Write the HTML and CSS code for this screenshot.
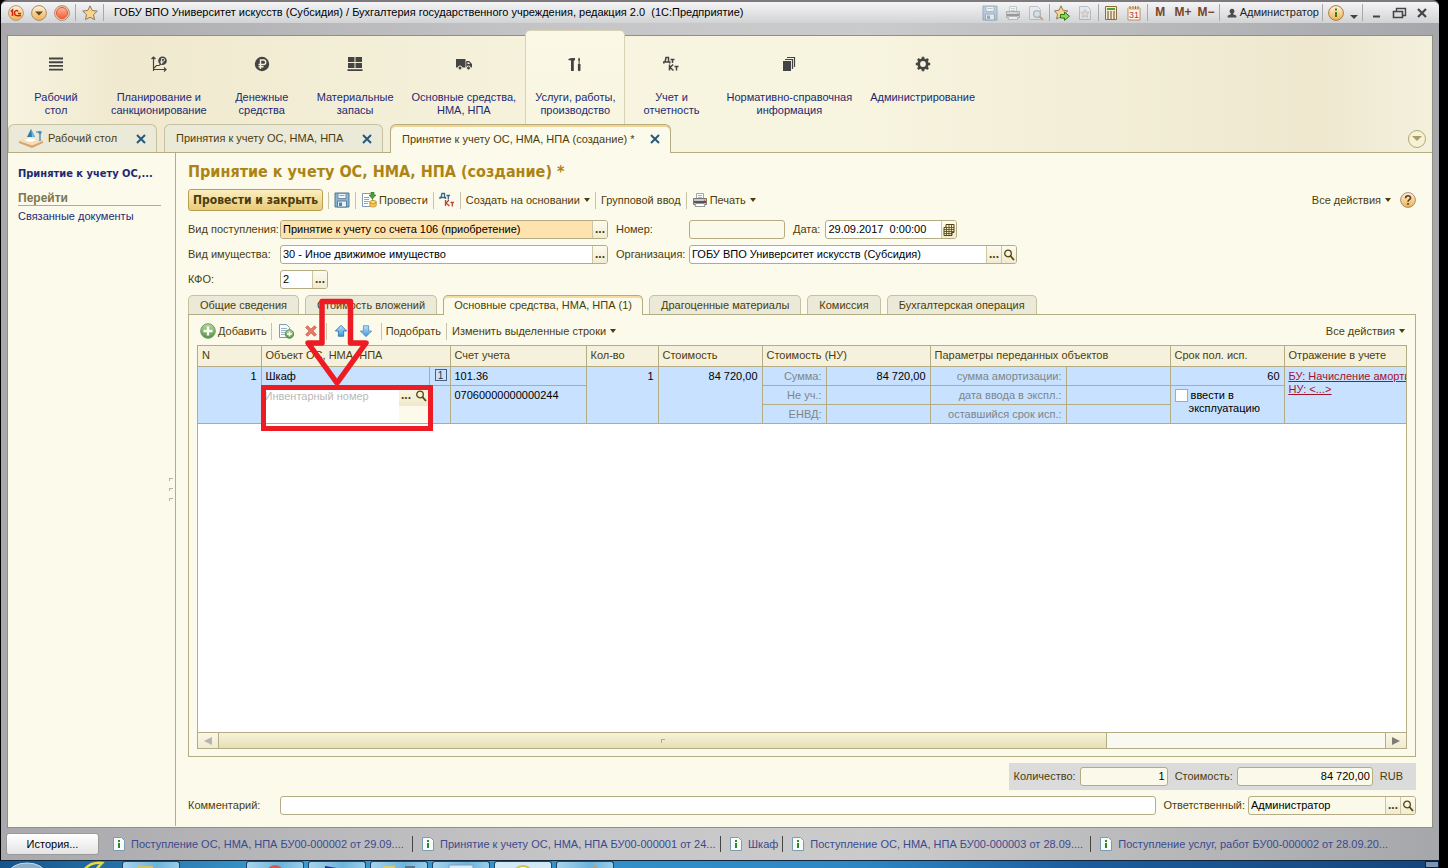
FILE: index.html
```html
<!DOCTYPE html>
<html lang="ru">
<head>
<meta charset="utf-8">
<title>Принятие к учету ОС, НМА, НПА (создание)</title>
<link rel="stylesheet" href="styles.css">
</head>
<body>
<svg class="defs" aria-hidden="true">
  <defs>
    <linearGradient id="orange" x1="0" y1="0" x2="0" y2="1"><stop offset="0" stop-color="#fff3d8"/><stop offset="1" stop-color="#f0b050"/></linearGradient>
    <linearGradient id="red" x1="0" y1="0" x2="0" y2="1"><stop offset="0" stop-color="#ffb59c"/><stop offset="1" stop-color="#f0603a"/></linearGradient>
    <linearGradient id="blue" x1="0" y1="0" x2="0" y2="1"><stop offset="0" stop-color="#b9e2fa"/><stop offset="1" stop-color="#3f95d6"/></linearGradient>
    <linearGradient id="green" x1="0" y1="0" x2="0" y2="1"><stop offset="0" stop-color="#b5dc98"/><stop offset="1" stop-color="#4f9440"/></linearGradient>
  </defs>
  <symbol id="i-save" viewBox="0 0 16 16"><path d="M1 1h14v14H1z" fill="#8fb3cf" stroke="#4d7898"/><path d="M4 1.500h8v5H4z" fill="#f4f8fb" stroke="#6b8fab"/><path d="M5.500 3.500h5" stroke="#8aa"/><path d="M3.500 9h9v6h-9z" fill="#e8f1f6" stroke="#54809f"/><path d="M5 10.500h3V14H5z" fill="#54809f"/></symbol>
  <symbol id="i-print" viewBox="0 0 16 16"><path d="M4.500 1.500h7V7h-7z" fill="#f8fafc" stroke="#a5a5a5"/><path d="M6 3.500h4M6 5.500h4" stroke="#9cb8cc"/><path d="M1.500 6.500h13v6h-13z" fill="#c9c9c9" stroke="#777"/><path d="M2 10h12" stroke="#555" stroke-width="2"/><path d="M4 11.500h8l1 3H3z" fill="#fff" stroke="#999"/><circle cx="12.500" cy="8.200" r=".8" fill="#e07030"/></symbol>
  <symbol id="i-find" viewBox="0 0 16 16"><path d="M1.500 1.500h8l3 3v10h-11z" fill="#e4ecf1" stroke="#8c9ca8"/><circle cx="9" cy="9" r="3.400" fill="#cfdde6" stroke="#78858f" stroke-width="1.300"/><path d="M11.500 11.500l3.500 3.500" stroke="#a0715c" stroke-width="2"/></symbol>
  <symbol id="i-star" viewBox="0 0 16 16"><path d="M8 .8l2.200 4.700 5.100.6-3.800 3.500 1 5.100L8 12.200l-4.500 2.500 1-5.100L.7 6.100l5.100-.6z" fill="#fbd485" stroke="#8b7a68"/></symbol>
  <symbol id="i-stargo" viewBox="0 0 16 16"><path d="M7 .8l2 4.500 4.800.6-3.600 3.300.9 4.800L7 11.700 2.600 14l.9-4.800L.4 5.900l4.600-.6z" fill="#fbd485" stroke="#8b7a68"/><path d="M6.500 9.500h4V7l5 4.200-5 4.200V13h-4z" fill="#8ed35a" stroke="#2f7a18"/></symbol>
  <symbol id="i-docstar" viewBox="0 0 16 16"><path d="M2.500 1.500h8l3 3v10h-11z" fill="#dfe5ea" stroke="#8795a2"/><path d="M8 4.500l1.200 2.600 2.800.3-2 2 .5 2.800L8 10.800l-2.500 1.400.5-2.800-2-2 2.800-.3z" fill="#e4cfb6" stroke="#8795a2" stroke-width=".8"/></symbol>
  <symbol id="i-calc" viewBox="0 0 16 16"><path d="M2.500 1.500h11v13h-11z" fill="#f5ead2" stroke="#8d6c3c"/><path d="M4 3h8v2H4z" fill="#5a9c3a"/><path d="M4 7h8M4 9h8M4 11h8M4 13h8" stroke="#694c2c" stroke-dasharray="2 1"/></symbol>
  <symbol id="i-user" viewBox="0 0 16 16"><circle cx="8" cy="5" r="3.800" fill="#4c4c4c"/><path d="M6 7h4v3l5 2.500V15H1v-2.500L6 10z" fill="#4c4c4c"/></symbol>
  <symbol id="i-info" viewBox="0 0 16 16"><circle cx="8" cy="8" r="7.400" fill="url(#orange)" stroke="#a97b43"/><path d="M7 7h2v5H7zM7 3.500h2v2H7z" fill="#3e7c24"/></symbol>
  <symbol id="i-help" viewBox="0 0 16 16"><circle cx="8" cy="8" r="7.400" fill="url(#orange)" stroke="#a58a78"/><path d="M5.600 6.200c0-3.300 5-3.200 5-.3C10.600 7.800 8 7.600 8 9.800" fill="none" stroke="#5b3b24" stroke-width="1.600"/><path d="M7.200 11h1.700v1.700H7.200z" fill="#5b3b24"/></symbol>
  <symbol id="i-post" viewBox="0 0 16 16"><path d="M1.500 1.500h8l2 2v11h-10z" fill="#fff" stroke="#7a9cb4"/><path d="M3 5.500h5M3 7.500h5M3 9.500h5M3 11.500h4" stroke="#87a9c3"/><path d="M10 0v3H8l3.300 4L15 3h-2V0z" fill="#4b9e38" stroke="#2e7320" stroke-width=".6"/><ellipse cx="12" cy="10" rx="3.300" ry="1.500" fill="#ffe28a" stroke="#c59429"/><path d="M8.700 10v3.500c0 2 6.600 2 6.600 0V10c0 2-6.600 2-6.600 0z" fill="#f3c148" stroke="#c59429" stroke-width=".7"/></symbol>
  <symbol id="i-dtkt" viewBox="0 0 16 16"><g fill="none" stroke-width="1.300"><path d="M1 7V5.500h5.500V7M2 5.500L3 1.500h2.500v4M7.500 3.500H11M9.300 3.500v4" stroke="#34688a"/><path d="M6.500 8v6M10 8l-3 3 3.500 3M11.500 10.500H15M13.300 10.500v4" stroke="#bd4538"/></g></symbol>
  <symbol id="i-add" viewBox="0 0 16 16"><circle cx="8" cy="8" r="7.300" fill="url(#green)" stroke="#74966b"/><path d="M8 3.500v9M3.500 8h9" stroke="#fff" stroke-width="2.400"/></symbol>
  <symbol id="i-copy" viewBox="0 0 16 16"><path d="M1.500 1.500h7l3 3v10h-10z" fill="#f8fbfd" stroke="#7f9db2"/><path d="M3 5.500h6M3 7.500h6M3 9.500h4M3 11.500h4" stroke="#9bb5c7"/><circle cx="11.500" cy="11" r="4.200" fill="url(#green)" stroke="#5c8550"/><path d="M11.500 8.500v5M9 11h5" stroke="#fff" stroke-width="1.500"/></symbol>
  <symbol id="i-del" viewBox="0 0 16 16"><path d="M2 4l2-2 4 4 4-4 2 2-4 4 4 4-2 2-4-4-4 4-2-2 4-4z" fill="#ee7a66" stroke="#cf5243"/></symbol>
  <symbol id="i-up" viewBox="0 0 16 16"><path d="M8 1.500L14.500 8H11v6H5V8H1.500z" fill="url(#blue)" stroke="#2f76b2"/></symbol>
  <symbol id="i-down" viewBox="0 0 16 16"><path d="M8 14.500L1.500 8H5V2h6v6h3.500z" fill="url(#blue)" stroke="#5a92c4"/></symbol>
  <symbol id="i-lens" viewBox="0 0 12 12"><circle cx="5" cy="4.500" r="3.300" fill="none" stroke="#54440c" stroke-width="1.300"/><path d="M7.500 7l3.500 4" stroke="#54440c" stroke-width="1.800"/></symbol>
  <symbol id="i-grid" viewBox="0 0 12 12"><path d="M3 .5h8v8H9v3H1v-8h2z" fill="#f5efd0" stroke="#54440c"/><path d="M1 5.500h10M1 7.500h10M1 9.500h8M3 3.500h8M3.500 3v8M6 1v10M8.500 1v10" stroke="#54440c" stroke-width=".8"/></symbol>
  <symbol id="i-doc" viewBox="0 0 14 14"><path d="M1.500.5h8l3 3v10h-11z" fill="#f6fafc" stroke="#7d9cb0"/><path d="M6 6h2v5H6zM6 3h2v2H6z" fill="#2f8a1c"/></symbol>
  <symbol id="i-x" viewBox="0 0 12 12"><path d="M2 2l8 8M10 2l-8 8" stroke="#235a80" stroke-width="2"/></symbol>
  <symbol id="i-ruble" viewBox="0 0 16 16"><circle cx="8" cy="8" r="7.200" fill="#444"/><path d="M6.500 13V4h3a2.200 2.200 0 010 4.500H4.500M4.500 10.700h5" fill="none" stroke="#f5efd8" stroke-width="1.400"/></symbol>
</svg>

<div class="window">
  <header class="titlebar">
    <button class="tb orb" aria-label="Меню"><svg viewBox="0 0 16 16"><circle cx="8" cy="8" r="7.400" fill="url(#orange)" stroke="#b39a7c"/><path d="M2.800 6.500L4.500 5v6M10 6.500C9 4.600 6.500 5.500 6.500 8s1.500 3 6.500 2.500M10 8.500H13" fill="none" stroke="#d3230f" stroke-width="1.500"/></svg></button>
    <button class="tb orb" aria-label="Главное меню"><svg viewBox="0 0 16 16"><circle cx="8" cy="8" r="7.400" fill="url(#orange)" stroke="#a98c6c"/><path d="M4 6.500h8L8 10.500z" fill="#5c4a30"/></svg></button>
    <button class="tb orb" aria-label="Закрыть базу"><svg viewBox="0 0 16 16"><circle cx="8" cy="8" r="7.400" fill="#f9c9a8" stroke="#a98c7c"/><circle cx="8" cy="8" r="5.500" fill="url(#red)" stroke="#e05a38"/></svg></button>
    <i class="sep"></i>
    <button class="tb" aria-label="Избранное"><svg><use href="#i-star"/></svg></button>
    <i class="sep"></i>
    <h1 class="app-title">ГОБУ ВПО Университет искусств (Субсидия) / Бухгалтерия государственного учреждения, редакция 2.0 &nbsp;(1С:Предприятие)</h1>
    <div class="tb-right">
      <button class="tb dim" aria-label="Сохранить"><svg><use href="#i-save"/></svg></button>
      <button class="tb dim" aria-label="Печать"><svg><use href="#i-print"/></svg></button>
      <button class="tb dim" aria-label="Просмотр"><svg><use href="#i-find"/></svg></button>
      <i class="sep"></i>
      <button class="tb" aria-label="Добавить в избранное"><svg><use href="#i-stargo"/></svg></button>
      <button class="tb dim" aria-label="Ссылка"><svg><use href="#i-docstar"/></svg></button>
      <i class="sep"></i>
      <button class="tb" aria-label="Калькулятор"><svg><use href="#i-calc"/></svg></button>
      <button class="tb" aria-label="Календарь"><svg viewBox="0 0 16 16"><path d="M2 3h12v12H2z" fill="#fff8ee" stroke="#c08a5c"/><path d="M2 2.500h12v2.500H2z" fill="#f2c791"/><path d="M4 1v3M7 1v3M9.500 1v3M12 1v3" stroke="#9c7440"/><text x="8" y="13" text-anchor="middle" class="cal-num">31</text></svg></button>
      <i class="sep"></i>
      <button class="tb mem">M</button>
      <button class="tb mem">M+</button>
      <button class="tb mem">M−</button>
      <i class="sep"></i>
      <button class="tb user"><svg><use href="#i-user"/></svg>Администратор</button>
      <i class="sep"></i>
      <button class="tb" aria-label="Справка"><svg><use href="#i-info"/></svg></button>
      <button class="tb slim" aria-label="Ещё"><i class="caret"></i></button>
      <i class="sep"></i>
      <button class="tb" aria-label="Свернуть"><svg viewBox="0 0 16 16"><path d="M5 11.500h7" stroke="#444" stroke-width="2"/></svg></button>
      <button class="tb" aria-label="Восстановить"><svg viewBox="0 0 16 16"><path d="M5.500 6V3.500h9v7H12" fill="none" stroke="#444" stroke-width="1.400"/><path d="M2.500 6.500h9v6h-9z" fill="#ddd" stroke="#444" stroke-width="1.600"/></svg></button>
      <button class="tb" aria-label="Закрыть"><svg viewBox="0 0 16 16"><path d="M4 4l8 8M12 4l-8 8" stroke="#444" stroke-width="2.200"/></svg></button>
    </div>
  </header>

  <div class="client">
    <div class="ribbon">
      <nav class="sections">
        <a class="section" href="#"><svg viewBox="0 0 16 16"><path d="M1 2.500h14M1 6.200h14M1 9.900h14M1 13.600h14" stroke="#444" stroke-width="1.900"/></svg><span>Рабочий<br>стол</span></a>
        <a class="section" href="#"><svg viewBox="0 0 16 16"><path d="M2.500 15V1M.5 3l2-2 2 2M2 13.500h13M13 11.500l2 2-2 2M3 12l2.500-2.500H8L10 8" fill="none" stroke="#444" stroke-width="1.200"/><circle cx="11.500" cy="4.800" r="4.300" fill="#444"/><path d="M10.500 8V2.500h1.700a1.300 1.300 0 010 2.800H9.300M9.300 6.700h3" fill="none" stroke="#f5efd8" stroke-width=".9"/></svg><span>Планирование и<br>санкционирование</span></a>
        <a class="section" href="#"><svg><use href="#i-ruble"/></svg><span>Денежные<br>средства</span></a>
        <a class="section" href="#"><svg viewBox="0 0 16 16"><path d="M1 1h6.500v5H1zM8.500 1H15v5H8.500zM1 7h6.500v5H1zM8.500 7H15v5H8.500zM.5 13.200h15V15H.5z" fill="#444"/></svg><span>Материальные<br>запасы</span></a>
        <a class="section" href="#"><svg viewBox="0 0 16 16"><path d="M0 3h9.500v8.500H0zM10.200 5h3L16 8v3.500h-5.800z" fill="#444"/><path d="M11.500 6.200h1.300l1.300 1.800h-2.600z" fill="#f5efd8"/><circle cx="4" cy="12" r="2" fill="#444" stroke="#f5efd8"/><circle cx="12.500" cy="12" r="2" fill="#444" stroke="#f5efd8"/></svg><span>Основные средства,<br>НМА, НПА</span></a>
        <a class="section current" href="#"><svg viewBox="0 0 16 16"><path d="M1 4c1-2 3-2 7-2v2.500H6.800V15H4V4.500z" fill="#444"/><path d="M12 1.500c1.500 1 1 3 .6 4V8h.9v6c0 1.500-2.600 1.500-2.600 0V8h.7V5.500c-.4-1-.8-3 .4-4z" fill="#444"/></svg><span>Услуги, работы,<br>производство</span></a>
        <a class="section" href="#"><svg viewBox="0 0 16 16"><path d="M.8 7.500V6h6v1.500M2 6l1-4.500h2.500V6M7.500 3.500h4M9.500 3.500V7M6.500 8.500v6M10.200 8.500L7 11.500l3.500 3M11.500 10.500h4M13.500 10.500v4" fill="none" stroke="#444" stroke-width="1.500"/></svg><span>Учет и<br>отчетность</span></a>
        <a class="section" href="#"><svg viewBox="0 0 16 16"><path d="M2 5h8v10H2z" fill="#444"/><path d="M4 3.500h7.500V13M6 1.500h7.500V11" fill="none" stroke="#444" stroke-width="1.200"/></svg><span>Нормативно-справочная<br>информация</span></a>
        <a class="section" href="#"><svg viewBox="0 0 16 16"><circle cx="8" cy="8" r="4.300" fill="none" stroke="#444" stroke-width="2.800"/><path d="M8 .8v3M8 12.200v3M.8 8h3M12.200 8h3M2.900 2.900L5 5M11 11l2.100 2.100M2.900 13.100L5 11M11 5l2.100-2.100" stroke="#444" stroke-width="2.600"/></svg><span>Администрирование</span></a>
      </nav>
      <div class="doc-tabs">
        <div class="doc-tab home"><svg class="desk" viewBox="0 0 24 20"><path d="M0 12l9-3 15 3v2l-11 5L0 14z" fill="#d9a56b"/><path d="M0 12l9-3.500 15 3.500-11 4.500z" fill="#f6deba"/><path d="M5 11l6-2 7 2-6 2z" fill="#fff"/><path d="M12 0l4 8H8z" fill="#2f7aa8"/><path d="M12 0l4 8h-3z" fill="#6fb8dc"/><path d="M21 4v8M17 3h4" stroke="#3b7ea6" stroke-width="1.200"/><circle cx="21" cy="3.500" r="1.700" fill="#4a90bb"/></svg><span>Рабочий стол</span><button aria-label="Закрыть"><svg><use href="#i-x"/></svg></button></div>
        <div class="doc-tab list"><span>Принятия к учету ОС, НМА, НПА</span><button aria-label="Закрыть"><svg><use href="#i-x"/></svg></button></div>
        <div class="doc-tab current create"><span>Принятие к учету ОС, НМА, НПА (создание) *</span><button aria-label="Закрыть"><svg><use href="#i-x"/></svg></button></div>
        <button class="round" aria-label="Список окон"><i class="caret"></i></button>
      </div>
    </div>

    <div class="body">
      <aside class="side">
        <a class="side-title" href="#">Принятие к учету ОС,...</a>
        <h2>Перейти</h2>
        <a class="side-link" href="#">Связанные документы</a>
        <div class="grip"><i></i><i></i><i></i></div>
      </aside>

      <main>
        <h2 class="form-title">Принятие к учету ОС, НМА, НПА (создание) *</h2>
        <div class="commands">
          <button class="primary">Провести и закрыть</button>
          <i class="sep"></i>
          <button aria-label="Записать"><svg><use href="#i-save"/></svg></button>
          <i class="sep"></i>
          <button><svg><use href="#i-post"/></svg>Провести</button>
          <i class="sep"></i>
          <button aria-label="Дт Кт"><svg><use href="#i-dtkt"/></svg></button>
          <i class="sep"></i>
          <button>Создать на основании<i class="caret"></i></button>
          <i class="sep"></i>
          <button>Групповой ввод</button>
          <i class="sep"></i>
          <button><svg><use href="#i-print"/></svg>Печать<i class="caret"></i></button>
          <button class="push">Все действия<i class="caret"></i></button>
          <button class="help" aria-label="Справка"><svg><use href="#i-help"/></svg></button>
        </div>

        <div class="fields">
          <label for="kind">Вид поступления:</label>
          <div class="field picked"><input id="kind" value="Принятие к учету со счета 106 (приобретение)"><button>...</button></div>
          <label for="num" class="second">Номер:</label>
          <div class="pair">
            <div class="field number ro"><input id="num" value=""></div>
            <label for="date">Дата:</label>
            <div class="field date"><input id="date" value="29.09.2017  0:00:00"><button aria-label="Выбрать дату"><svg><use href="#i-grid"/></svg></button></div>
          </div>
          <label for="prop">Вид имущества:</label>
          <div class="field"><input id="prop" value="30 - Иное движимое имущество"><button>...</button></div>
          <label for="org" class="second">Организация:</label>
          <div class="field"><input id="org" value="ГОБУ ВПО Университет искусств (Субсидия)"><button>...</button><button aria-label="Открыть"><svg><use href="#i-lens"/></svg></button></div>
          <label for="kfo">КФО:</label>
          <div class="field tiny"><input id="kfo" value="2"><button>...</button></div>
        </div>

        <div class="pages" role="tablist">
          <button role="tab">Общие сведения</button>
          <button role="tab">Стоимость вложений</button>
          <button role="tab" class="current">Основные средства, НМА, НПА (1)</button>
          <button role="tab">Драгоценные материалы</button>
          <button role="tab">Комиссия</button>
          <button role="tab">Бухгалтерская операция</button>
        </div>

        <section class="page">
          <div class="commands rows">
            <button class="add"><svg><use href="#i-add"/></svg>Добавить</button>
            <i class="sep"></i>
            <button class="icon" aria-label="Скопировать"><svg><use href="#i-copy"/></svg></button>
            <button class="icon" aria-label="Удалить"><svg class="s14"><use href="#i-del"/></svg></button>
            <i class="sep"></i>
            <button class="icon" aria-label="Вверх"><svg class="s14"><use href="#i-up"/></svg></button>
            <button class="icon" aria-label="Вниз"><svg class="s14"><use href="#i-down"/></svg></button>
            <i class="sep"></i>
            <button>Подобрать</button>
            <i class="sep"></i>
            <button>Изменить выделенные строки<i class="caret"></i></button>
            <button class="push">Все действия<i class="caret"></i></button>
          </div>

          <div class="sheet">
            <div class="scroller">
              <table>
                <colgroup><col class="c-n"><col class="c-obj"><col class="c-pick"><col class="c-acc"><col class="c-qty"><col class="c-sum"><col class="c-lbl"><col class="c-sum"><col class="c-par"><col class="c-sum"><col class="c-term"><col></colgroup>
                <thead>
                  <tr><th>N</th><th colspan="2">Объект ОС, НМА, НПА</th><th>Счет учета</th><th>Кол-во</th><th>Стоимость</th><th colspan="2">Стоимость (НУ)</th><th colspan="2">Параметры переданных объектов</th><th>Срок пол. исп.</th><th>Отражение в учете</th></tr>
                </thead>
                <tbody>
                  <tr><td rowspan="3" class="r">1</td><td>Шкаф</td><td class="pick"><button aria-label="Режим">1</button></td><td>101.36</td><td rowspan="3" class="r">1</td><td rowspan="3" class="r">84 720,00</td><td class="r hint">Сумма:</td><td class="r">84 720,00</td><td class="r hint">сумма амортизации:</td><td></td><td class="r">60</td><td rowspan="3" class="links"><a href="#">БУ: Начисление аморти</a><br><a href="#">НУ: &lt;...&gt;</a></td></tr>
                  <tr><td rowspan="2" colspan="2" class="edit"><div class="inline-edit"><input aria-label="Инвентарный номер" placeholder="Инвентарный номер"><div class="edit-btns"><button>...</button><button aria-label="Открыть"><svg><use href="#i-lens"/></svg></button></div></div></td><td rowspan="2">07060000000000244</td><td class="r hint">Не уч.:</td><td></td><td class="r hint">дата ввода в экспл.:</td><td></td><td rowspan="2" class="check"><label><input type="checkbox"><span>ввести в эксплуатацию</span></label></td></tr>
                  <tr><td class="r hint">ЕНВД:</td><td></td><td class="r hint">оставшийся срок исп.:</td><td></td></tr>
                </tbody>
              </table>
              <svg class="callout" viewBox="0 0 132 134" aria-hidden="true"><path d="M22 45H8l29 40 29-40H50.500V3.500H22z" fill="none" stroke="#ed1c24" stroke-width="5.500" stroke-linejoin="round"/><path d="M-36.500 89.500h167v41h-167z" fill="none" stroke="#ed1c24" stroke-width="5"/></svg>
            </div>
            <div class="hbar"><button aria-label="Влево"><i class="tri left"></i></button><div class="thumb"><i></i></div><div class="track"></div><button aria-label="Вправо"><i class="tri right"></i></button></div>
          </div>
        </section>

        <div class="totals">
          <label for="tq">Количество:</label><div class="field ro tq"><input id="tq" value="1"></div>
          <label for="ts">Стоимость:</label><div class="field ro ts"><input id="ts" value="84 720,00"></div>
          <span>RUB</span>
        </div>
        <div class="footer-row">
          <label for="cm">Комментарий:</label><div class="field grow"><input id="cm" value=""></div>
          <label for="resp" class="resp-label">Ответственный:</label><div class="field ro resp"><input id="resp" value="Администратор"><button>...</button><button aria-label="Открыть"><svg><use href="#i-lens"/></svg></button></div>
        </div>
      </main>
    </div>
  </div>

  <footer class="status">
    <button class="history">История...</button>
    <a class="hist wide" href="#"><svg><use href="#i-doc"/></svg><span>Поступление ОС, НМА, НПА БУ00-000002 от 29.09....</span></a>
    <a class="hist wide" href="#"><svg><use href="#i-doc"/></svg><span>Принятие к учету ОС, НМА, НПА БУ00-000001 от 24...</span></a>
    <a class="hist" href="#"><svg><use href="#i-doc"/></svg><span>Шкаф</span></a>
    <a class="hist wide" href="#"><svg><use href="#i-doc"/></svg><span>Поступление ОС, НМА, НПА БУ00-000003 от 28.09....</span></a>
    <a class="hist wide" href="#"><svg><use href="#i-doc"/></svg><span>Поступление услуг, работ БУ00-000002 от 28.09.20...</span></a>
  </footer>
</div>

<div class="taskbar">
  <svg class="start" viewBox="0 0 118 8"><ellipse cx="27" cy="12" rx="18" ry="10" fill="#8eaec8" stroke="#c9dcea"/><path d="M84 9c4-5 10-8 18-7-2 2-4 4-6 7" fill="none" stroke="#ecd93a" stroke-width="2.500"/></svg>
  <i class="task"><svg viewBox="0 0 56 8"><path d="M14 4h16v4H14z" fill="#d3c076"/></svg></i>
  <i class="task apart"><svg viewBox="0 0 56 8"><circle cx="28" cy="12" r="9" fill="#d8574c"/></svg></i>
  <i class="task"><svg viewBox="0 0 56 8"><path d="M16 4l24 4H16z" fill="#1f2b9c"/></svg></i>
  <i class="task"><svg viewBox="0 0 56 8"><path d="M12 4h12v4H12z" fill="#d8cc72"/><path d="M34 4h10v4H34z" fill="#5b7488"/></svg></i>
  <i class="task"><svg viewBox="0 0 56 8"><path d="M16 9V3h24v6" fill="#dceaf6" stroke="#7ba0c4"/></svg></i>
  <i class="task bright"><svg viewBox="0 0 56 8"><circle cx="28" cy="14" r="10" fill="#fff" stroke="#cfc24e" stroke-width="2"/></svg></i>
  <i class="task"><svg viewBox="0 0 56 8"><path d="M33 8l5-5 4 5" fill="#d09a58"/></svg></i>
  <i class="desk-edge"></i>
</div>
</body>
</html>
```
FILE: styles.css
```css
* { box-sizing: border-box; }
html, body { height: 100%; }
body {
  margin: 0;
  display: flex;
  flex-direction: column;
  background: #000;
  color: #4c3d0b;
  font: 11px/13px "Liberation Sans", Arial, sans-serif;
  overflow: hidden;
}
button, input { font: inherit; color: inherit; margin: 0; }
button { background: none; border: 0; padding: 0; display: inline-flex; align-items: center; justify-content: center; white-space: nowrap; }
a { color: #1c2a73; text-decoration: none; }
h1, h2 { margin: 0; font: inherit; }
svg { display: block; flex: none; width: 16px; height: 16px; }
.defs { position: absolute; width: 0; height: 0; }
.cal-num { font: 9px "Liberation Sans", sans-serif; fill: #d0301c; }
.caret { border: 3px solid transparent; border-top: 4px solid #4c3d0b; border-bottom: 0; }

/* window frame */
.window {
  flex: 1;
  min-height: 0;
  display: flex;
  flex-direction: column;
  margin-right: 9px;
  margin-left: 1px;
  padding: 0 6px;
  border-top: 2px solid #7d797c;
  border-radius: 6px 6px 0 0;
  background: linear-gradient(90deg, #a9a9ad, #c6c6c8 40%, #cbcbcc 60%, #a6a7ab);
}
.titlebar {
  display: flex;
  align-items: center;
  height: 21px;
  margin: 0 -6px 12px;
  padding: 0 6px 0 3px;
  background: linear-gradient(#f4f4f5, #d2d3d5);
  border-radius: 5px 5px 0 0;
}
.tb { width: 23px; height: 21px; }
.tb-right { display: flex; align-items: center; margin-left: auto; }
.sep { width: 1px; height: 17px; margin: 0 1px; background: #a9a9a9; flex: none; }
.titlebar > .sep { margin: 0 2px; }
.dim { opacity: .5; }
.mem { color: #7a4325; font-weight: bold; font-size: 12px; }
.slim { width: 14px; align-items: flex-end; padding-bottom: 4px; }
.slim .caret { border-width: 4px; border-bottom: 0; border-top-color: #444; }
.user { width: auto; gap: 3px; padding: 0 2px 0 6px; color: #222; }
.user svg { width: 10px; height: 10px; }
.app-title { padding-left: 8px; color: #000; white-space: nowrap; }

.client {
  flex: 1;
  min-height: 0;
  display: flex;
  flex-direction: column;
  border: 1px solid #8f8f86;
  background: #fcfaeb;
}
.ribbon { background: linear-gradient(90deg, #f7f3df, #f0e9cf 8%, #f7f4df 45%, #f7f4df 60%, #efe8cf 92%, #f3f0dc); }
.sections { display: flex; align-items: stretch; height: 89px; padding-left: 2px; }
.section {
  display: flex;
  flex-direction: column;
  align-items: center;
  gap: 19px;
  min-width: 92px;
  padding: 20px 9px 0;
  text-align: center;
  white-space: nowrap;
}
.section.current {
  margin-top: -6px;
  padding-top: 25px;
  border: 1px solid #d8d2b4;
  border-width: 1px 1px 0;
  border-radius: 5px 5px 0 0;
  background: linear-gradient(#fbf8e6, #f8f5e0);
}
.doc-tabs { display: flex; align-items: flex-end; gap: 7px; height: 28px; border-bottom: 1px solid #b3ac85; }
.doc-tab {
  display: flex;
  align-items: center;
  height: 28px;
  padding: 0 8px 0 11px;
  border: 1px solid #c6c1a0;
  border-bottom: 0;
  border-radius: 6px 6px 0 0;
  background: #ebe9d8;
  white-space: nowrap;
}
.doc-tab.current { height: 29px; margin-bottom: -1px; border-color: #b3ac85; background: #fcfaeb; box-shadow: inset 0 2px #f3d593; }
.doc-tab button { margin-left: auto; width: 14px; height: 14px; }
.doc-tab button svg { width: 12px; height: 12px; }
.home { width: 149px; padding-left: 10px; gap: 5px; }
.list { width: 219px; }
.create { width: 281px; }
.desk { width: 24px; height: 20px; }
.round { align-self: center; margin-left: auto; margin-right: 6px; width: 18px; height: 18px; border: 1px solid #b1a874; border-radius: 50%; background: #f7f2d5; }
.round .caret { border-width: 5px; border-bottom: 0; border-top-color: #a79d68; }

/* form */
.body { flex: 1; min-height: 0; display: flex; }
.side { position: relative; width: 168px; flex: none; padding: 14px 14px 0 10px; border-right: 1px solid #b3ac85; margin: 0 0 1px; }
.side a { display: block; white-space: nowrap; }
.side-title { font-family: "DejaVu Sans Condensed", "DejaVu Sans", sans-serif; font-weight: bold; }
.side h2 { margin: 12px 0 4px; color: #7d7650; border-bottom: 1px solid #b3ac85; font-size: 12px; font-weight: bold; }
.grip { position: absolute; right: 2px; top: 325px; display: grid; gap: 7px; }
.grip i { width: 4px; height: 3px; border: 1px solid #b9b49a; border-width: 1px 0 0 1px; }
main { flex: 1; min-width: 0; display: flex; flex-direction: column; padding: 9px 16px 12px 12px; }
.form-title { font: bold 16px/20px "DejaVu Sans Condensed", "DejaVu Sans", sans-serif; color: #ac8414; }
.commands { display: flex; align-items: center; gap: 5px; margin-top: 7px; height: 22px; }
.commands .sep { background: #c9c4a8; margin: 0; }
.commands button { gap: 2px; }
.commands button .caret { margin-left: 2px; }
.commands .push { margin-left: auto; }
.help { margin-left: 4px; }
.commands .primary {
  height: 22px;
  padding: 0 4px;
  border: 1px solid #b99f51;
  border-radius: 3px;
  background: linear-gradient(#fbeebf, #e9cb78);
  font-weight: bold;
  font-size: 12px;
  font-family: "DejaVu Sans Condensed", "DejaVu Sans", sans-serif;
  color: #4c3d0b;
}
.fields {
  display: grid;
  grid-template-columns: 92px minmax(0, 328px) 81px minmax(0, 328px);
  gap: 6px 0;
  align-items: center;
  margin-top: 9px;
}
.second { padding-left: 8px; }
.pair { display: flex; align-items: center; }
.pair label { margin: 0 5px 0 8px; }
.field { display: flex; height: 19px; border: 1px solid #b3ac85; border-radius: 3px; background: #fff; overflow: hidden; }
.field input { flex: 1; min-width: 0; border: 0; padding: 0 2px; background: none; color: #000; outline: 0; }
.field button { width: 15px; flex: none; border-left: 1px solid #ccc6a2; background: linear-gradient(#fdfbee, #f0ebd2); font-weight: bold; font-size: 12px; }
.field svg, .edit-btns svg { width: 12px; height: 12px; }
.picked input { background: #ffe3ae; }
.ro { background: #fbf9ea; }
.number { width: 96px; }
.date { width: 132px; }
.tiny { width: 48px; }

.pages { display: flex; gap: 6px; margin-top: 6px; }
.pages button { height: 19px; padding: 0 11px; border: 1px solid #c6c1a0; border-bottom: 0; border-radius: 5px 5px 0 0; background: #ebe9d8; }
.pages .current { height: 20px; margin-bottom: -1px; position: relative; padding: 0 10px; background: #fcfaeb; border-color: #b3ac85; box-shadow: inset 0 2px #f6dca4; }
.page { flex: 1; min-height: 0; display: flex; flex-direction: column; padding: 0 8px 7px; border: 1px solid #b3ac85; }
.rows { gap: 4px; margin: 5px 0 3px 3px; }
.rows button.icon { width: 21px; }
.rows .push { margin-right: 2px; }
.rows .sep:nth-last-of-type(1) { margin: 0 1px; }
.s14 { width: 14px; height: 14px; }
.sheet { flex: 1; min-height: 0; display: flex; flex-direction: column; border: 1px solid #b3ac85; background: #fff; }
.scroller { flex: 1; position: relative; min-height: 0; }
table { width: 100%; table-layout: fixed; border-collapse: collapse; border-style: hidden; box-shadow: 0 1px #b3ac85; }
.c-n { width: 63px; } .c-obj { width: 168px; } .c-pick { width: 21px; } .c-acc { width: 136px; } .c-qty { width: 72px; }
.c-sum { width: 104px; } .c-lbl { width: 64px; } .c-par { width: 136px; } .c-term { width: 114px; }
th, td { border: 1px solid #b3ac85; padding: 3px 4px 2px; text-align: left; vertical-align: top; font-weight: normal; white-space: nowrap; overflow: hidden; }
th { height: 20px; background: #f5f1dd; }
td { height: 19px; background: #c8e1ff; background-clip: padding-box; color: #000; }
.r { text-align: right; }
.hint { color: #7c8688; }
tbody td.pick { padding: 2px 0 0 5px; }
.pick button { width: 12px; height: 12px; border: 1px solid #47617c; font-size: 10px; color: #234; }
.links, .links a { color: #a3132c; text-decoration: underline; }
tbody td.edit { padding: 0; }
.inline-edit { display: flex; height: 37px; margin: 0 21px 0 3px; }
.inline-edit input { flex: 1; min-width: 0; height: 37px; border: 0; padding: 2px 0 18px; outline: 0; background: #fff; }
.inline-edit input::placeholder { color: #b9b9b9; opacity: 1; }
.edit-btns { display: flex; width: 30px; background: #fcfaeb; }
.edit-btns button { width: 15px; height: 20px; background: linear-gradient(#fbf8e6, #efe9cc); font-weight: bold; font-size: 12px; color: #4c3d0b; }
.check label { display: flex; gap: 1px; }
.check span { white-space: normal; text-indent: 2px; }
.check input { appearance: none; flex: none; width: 13px; height: 13px; margin: 0; border: 1px solid #b3ac85; background: #fff; }
.callout { position: absolute; left: 102px; top: -48px; width: 132px; height: 134px; overflow: visible; }
.hbar { display: flex; height: 16px; border-top: 1px solid #b3ac85; background: #faf9f1; }
.hbar button { width: 21px; background: linear-gradient(#faf7e6, #efead0); border-left: 1px solid #b3ac85; }
.hbar button:first-child { border-left: 0; border-right: 1px solid #b3ac85; }
.thumb { flex: 888; display: flex; align-items: center; justify-content: center; background: linear-gradient(#f7f3da, #e6dfb6); border-right: 1px solid #b3ac85; }
.thumb i { width: 4px; height: 4px; border: 1px solid #b3ac85; border-width: 1px 0 0 1px; }
.track { flex: 278; }
.tri { border: 4px solid transparent; }
.tri.left { border-right: 8px solid #b7b5a8; border-left: 0; }
.tri.right { border-left: 8px solid #7d7c74; border-right: 0; }

.totals { align-self: flex-end; display: flex; align-items: center; height: 27px; margin-top: 6px; padding: 0 13px 0 4px; background: #dbdbdb; }
.totals .field { margin: 0 7px 0 4px; }
.totals input { text-align: right; }
.tq { width: 88px; }
.ts { width: 136px; }
.footer-row { display: flex; align-items: center; margin-top: 6px; }
.footer-row > label:first-child { width: 92px; }
.grow { flex: 1; }
.resp-label { margin: 0 3px 0 7px; }
.resp { width: 168px; }

/* history */
.status { display: flex; align-items: center; height: 32px; margin-left: -1px; }
.history { width: 93px; height: 22px; margin-right: 5px; border: 1px solid #9a9a9a; border-radius: 3px; background: linear-gradient(#fff, #e4e4e4); color: #000; }
.hist { display: flex; align-items: center; gap: 5px; height: 16px; padding: 0 4px 0 8px; white-space: nowrap; color: #3c4a8c; }
.hist + .hist { border-left: 1px solid #444; }
.hist svg { width: 14px; height: 14px; }
.wide { flex: 0 1 308px; min-width: 0; }

.taskbar { display: flex; height: 8px; flex: none; gap: 4px; margin-right: 9px; border-top: 1px solid #10263c; background: linear-gradient(90deg, #15548c, #3a9bd0 20%, #2c86c4 60%, #1b5c9e 75%, #16457c); overflow: hidden; }
.start { width: 118px; height: 8px; }
.task { width: 58px; height: 8px; border: 1px solid #1f4668; border-bottom: 0; border-radius: 3px 3px 0 0; background: linear-gradient(100deg, #a8d4ec, #6db3dc 60%, #9bcdea); }
.task svg { width: 56px; height: 8px; }
.apart { margin-left: 62px; }
.bright { background: #d3e8f5; }
.desk-edge { width: 14px; margin-left: auto; border: 1px solid #0c2440; background: #7d96b4; }
```
